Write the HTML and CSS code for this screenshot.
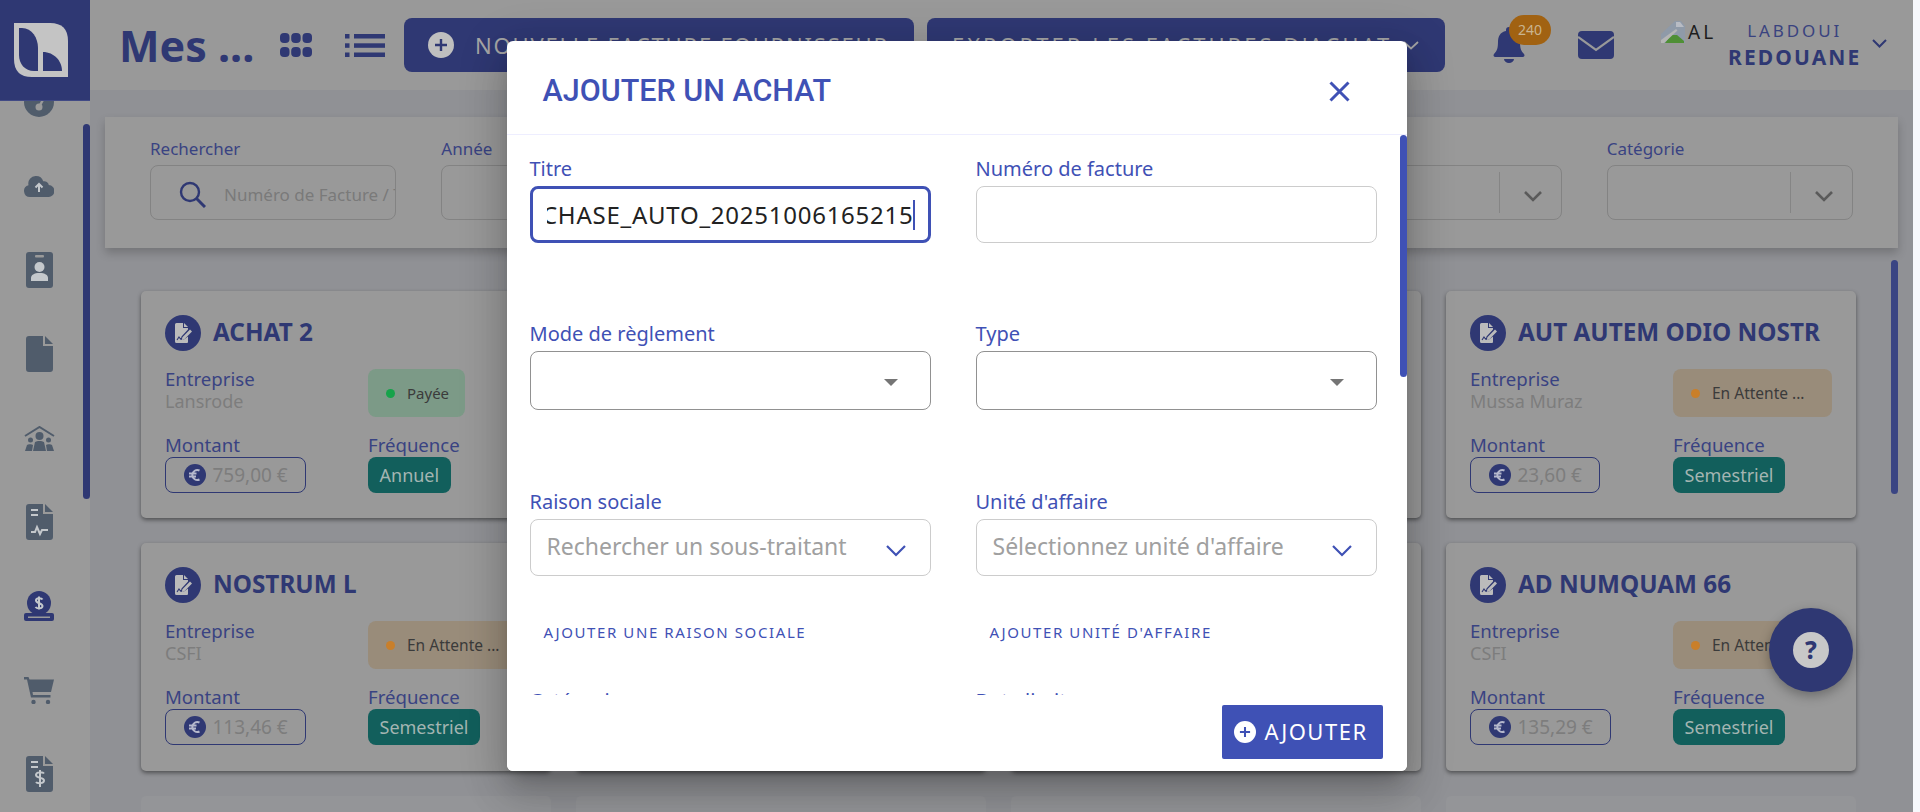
FILE: index.html
```html
<!DOCTYPE html>
<html lang="fr">
<head>
<meta charset="utf-8">
<title>Mes achats</title>
<link rel="stylesheet" href="styles.css">
</head>
<body>
<svg class="defs" width="0" height="0" aria-hidden="true">
  <symbol id="i-doc" viewBox="0 0 24 24">
    <path fill="currentColor" d="M4 3.500a1.500 1.500 0 0 1 1.500-1.500H12v5h5v1.600l-6.500 6.800-.8 3.600 3.600-.8L17 15.400V21a1 1 0 0 1-1 1H5.500A1.500 1.500 0 0 1 4 20.500z"/>
    <path fill="currentColor" d="M13 2l4 4h-4zM19 8.500l2 2-7.600 7.800-2.600.6.6-2.600z"/>
    <path fill="none" stroke="#2f3873" stroke-width="1.100" d="M6 19l2-3 1.500 2 1-.8"/>
  </symbol>
  <symbol id="i-euro" viewBox="0 0 22 22">
    <circle cx="11" cy="11" r="11" fill="#2f3873"/>
    <path fill="none" stroke="#b5b8cc" stroke-width="2" d="M15.500 6.500a5 5 0 1 0 0 9M5 9.500h7.500M5 12.500h7"/>
  </symbol>
  <symbol id="i-plus" viewBox="0 0 26 26">
    <circle cx="13" cy="13" r="13" fill="currentColor"/>
    <path stroke="var(--plus)" stroke-width="2.400" d="M13 7v12M7 13h12"/>
  </symbol>
</svg>

<div class="app">
  <aside class="sidebar">
    <div class="logo">
      <svg width="54" height="54" viewBox="0 0 54 54">
        <path fill="#c4c4c4" d="M0 0H36Q54 0 54 18V54H18Q0 54 0 36Z"/>
        <path fill="#2f3873" d="M5 5H8C18 5 24 15 24 25V48H20C11 48 5 41 5 32Z"/>
        <path fill="#2f3873" d="M29 29C40 29 48 38 48 48H29Z"/>
      </svg>
    </div>
    <nav class="nav">
      <span class="nav-item"><svg width="30" height="30" viewBox="0 0 30 30"><circle cx="15" cy="15" r="15" fill="currentColor"/><circle cx="15" cy="20" r="3.500" fill="#9a9a9a"/><path stroke="#9a9a9a" stroke-width="2.500" d="M15 20l5-9"/></svg></span>
      <span class="nav-item"><svg width="30" height="21" viewBox="0 0 30 21"><path fill="currentColor" d="M6 21a6 6 0 0 1-1.500-11.800A7.500 7.500 0 0 1 12 0a7.500 7.500 0 0 1 7.200 5.300A4.500 4.500 0 0 1 24.800 9 6 6 0 0 1 24 21z"/><path fill="none" stroke="#c4c8cc" stroke-width="2" d="M15 16V8M11.500 11.500L15 8l3.500 3.500"/></svg></span>
      <span class="nav-item"><svg width="27" height="36" viewBox="0 0 27 36"><rect width="27" height="36" rx="3" fill="currentColor"/><rect x="9" y="3" width="9" height="2.500" rx="1" fill="#9a9a9a"/><circle cx="13.500" cy="15" r="5" fill="#c4c8cc"/><path fill="#c4c8cc" d="M5 29v-3c0-3 3-5 8.500-5S22 23 22 26v3z"/></svg></span>
      <span class="nav-item"><svg width="27" height="36" viewBox="0 0 27 36"><path fill="currentColor" d="M3 0H17V10H27V33a3 3 0 0 1-3 3H3a3 3 0 0 1-3-3V3a3 3 0 0 1 3-3zM19 0L27 8H19z"/></svg></span>
      <span class="nav-item"><svg width="31" height="25" viewBox="0 0 31 25"><path fill="none" stroke="currentColor" stroke-width="2" d="M1 10L15.500 1 30 10"/><circle cx="15.500" cy="10" r="4" fill="currentColor"/><circle cx="6.500" cy="14" r="2.500" fill="currentColor"/><circle cx="24.500" cy="14" r="2.500" fill="currentColor"/><path fill="currentColor" d="M9 25l2-9c2-1.500 7-1.500 9 0l2 9zM1 25l2-6c1-1 5-1 6 0l-1 6zM30 25l-2-6c-1-1-5-1-6 0l1 6z"/></svg></span>
      <span class="nav-item"><svg width="27" height="36" viewBox="0 0 27 36"><path fill="currentColor" d="M3 0H17V10H27V33a3 3 0 0 1-3 3H3a3 3 0 0 1-3-3V3a3 3 0 0 1 3-3zM19 0L27 8H19z"/><path fill="none" stroke="#c4c8cc" stroke-width="2" d="M5 6h7M5 11h7M5 28h4l2-5 3 7 2-4h6"/></svg></span>
      <span class="nav-item"><svg width="30" height="30" viewBox="0 0 30 30"><rect x="0" y="22" width="30" height="8" rx="2" fill="#2f3873"/><rect x="4" y="25.500" width="22" height="1.500" fill="#9a9a9a"/><circle cx="15" cy="12" r="12" fill="#2f3873"/><path fill="none" stroke="#c4c8cc" stroke-width="2" d="M18.500 8.500C17.500 7 12 6.500 12 9.500S18.500 12 18.500 15 13 18 11.500 16M15 5.500v13"/></svg></span>
      <span class="nav-item"><svg width="30" height="27" viewBox="0 0 30 27"><path fill="currentColor" d="M0 0H4.500L5.500 2.500H30L27 15H8.500L9 18H26.500V20.500H7L3 2.500H0z"/><circle cx="9.500" cy="25" r="2.200" fill="currentColor"/><circle cx="24" cy="25" r="2.200" fill="currentColor"/></svg></span>
      <span class="nav-item"><svg width="27" height="36" viewBox="0 0 27 36"><path fill="currentColor" d="M3 0H17V10H27V33a3 3 0 0 1-3 3H3a3 3 0 0 1-3-3V3a3 3 0 0 1 3-3zM19 0L27 8H19z"/><path fill="none" stroke="#c4c8cc" stroke-width="2" d="M5 6h7M5 11h7M18 17.500c-1-1.500-8-2-8 1.500s8 2 8 5.500-7 3-8 1.500M14 14v17"/></svg></span>
    </nav>
    <span class="side-scroll"></span>
  </aside>

  <div class="main">
    <header class="topbar">
      <h1 class="page-title">Mes ...</h1>
      <svg class="view-grid" width="32" height="24" viewBox="0 0 32 24"><g fill="#2f3873"><rect width="9.500" height="10" rx="4"/><rect x="11.200" width="9.500" height="10" rx="4"/><rect x="22.500" width="9.500" height="10" rx="4"/><rect y="14" width="9.500" height="10" rx="4"/><rect x="11.200" y="14" width="9.500" height="10" rx="4"/><rect x="22.500" y="14" width="9.500" height="10" rx="4"/></g></svg>
      <svg class="view-list" width="40" height="23" viewBox="0 0 40 23"><g fill="#2f3873"><rect width="4.500" height="4.500"/><rect x="9" width="31" height="4.500"/><rect y="9.300" width="4.500" height="4.500"/><rect x="9" y="9.300" width="31" height="4.500"/><rect y="18.500" width="4.500" height="4.500"/><rect x="9" y="18.500" width="31" height="4.500"/></g></svg>
      <button class="top-btn top-btn-new" type="button"><svg class="plus-dim" width="26" height="26"><use href="#i-plus"/></svg><span>NOUVELLE FACTURE FOURNISSEUR</span></button>
      <button class="top-btn top-btn-export" type="button"><span>EXPORTER LES FACTURES D'ACHAT</span><svg width="16" height="9" viewBox="0 0 16 9"><path fill="none" stroke="#a5a5a5" stroke-width="1.800" d="M1 1l7 6.500L15 1"/></svg></button>
      <div class="bell">
        <svg width="32" height="36" viewBox="0 0 32 36"><path fill="#2f3873" d="M16 0a3 3 0 0 1 3 3v1c6 1 8 6 8 11 0 6 1 9 4 12 1 1 .5 3-1.500 3h-27C.5 30 0 28 1 27c3-3 4-6 4-12 0-5 2-10 8-11V3a3 3 0 0 1 3-3zM11 32h10a5 4 0 0 1-10 0z"/></svg>
        <span class="bell-badge">240</span>
      </div>
      <svg class="mail" width="36" height="28" viewBox="0 0 36 28"><rect width="36" height="28" rx="4" fill="#2f3873"/><path fill="none" stroke="#999" stroke-width="2.200" d="M0 6l18 13L36 6"/></svg>
      <div class="avatar">
        <svg width="24" height="22" viewBox="0 0 24 22"><path fill="#8f9aa8" d="M0 13L14 0H20L24 5V22H0z"/><path fill="#b8bcc4" d="M15 1h4l4 5h-8z"/><path fill="#4f8f35" d="M4 22L10 14H16L23 20V22z"/><path fill="#b5b5b5" d="M0 19L15 8l1.500 1.500L3 22H0z"/></svg>
        <span class="avatar-alt">AL</span>
      </div>
      <div class="user">
        <span class="user-first">LABDOUI</span>
        <span class="user-last">REDOUANE</span>
      </div>
      <svg class="user-chevron" width="15" height="9" viewBox="0 0 15 9"><path fill="none" stroke="#2f3873" stroke-width="2" d="M1 1l6.500 6.500L14 1"/></svg>
    </header>

    <section class="content">
      <form class="filters">
        <div class="filter">
          <label class="filter-label">Rechercher</label>
          <div class="filter-box filter-search">
            <svg width="27" height="27" viewBox="0 0 27 27"><circle cx="11" cy="11" r="9" fill="none" stroke="#2f3873" stroke-width="2.400"/><path stroke="#2f3873" stroke-width="3" d="M17.500 17.500L26 26"/></svg>
            <span class="filter-placeholder">Numéro de Facture / Titre</span>
          </div>
        </div>
        <div class="filter"><label class="filter-label">Année</label><div class="filter-box"></div></div>
        <div class="filter"><label class="filter-label">Mois</label><div class="filter-box filter-select"><span class="sel-arrow"><svg width="18" height="11" viewBox="0 0 18 11"><path fill="none" stroke="#5a5a5a" stroke-width="2.600" d="M1 1l8 8 8-8"/></svg></span></div></div>
        <div class="filter"><label class="filter-label">Statut</label><div class="filter-box filter-select"><span class="sel-arrow"><svg width="18" height="11" viewBox="0 0 18 11"><path fill="none" stroke="#5a5a5a" stroke-width="2.600" d="M1 1l8 8 8-8"/></svg></span></div></div>
        <div class="filter"><label class="filter-label">Type</label><div class="filter-box filter-select"><span class="sel-arrow"><svg width="18" height="11" viewBox="0 0 18 11"><path fill="none" stroke="#5a5a5a" stroke-width="2.600" d="M1 1l8 8 8-8"/></svg></span></div></div>
        <div class="filter"><label class="filter-label">Catégorie</label><div class="filter-box filter-select"><span class="sel-arrow"><svg width="18" height="11" viewBox="0 0 18 11"><path fill="none" stroke="#5a5a5a" stroke-width="2.600" d="M1 1l8 8 8-8"/></svg></span></div></div>
      </form>

      <div class="cards">
        <article class="card"><h2 class="card-title"><span class="card-icon"><svg width="24" height="24"><use href="#i-doc"/></svg></span>ACHAT 2</h2><div class="card-grid"><div class="kv"><span class="k">Entreprise</span><span class="v">Lansrode</span></div><div class="status status-paid"><i></i>Payée</div><div class="kv2"><span class="k">Montant</span><span class="amount"><svg width="22" height="22"><use href="#i-euro"/></svg>759,00 €</span></div><div class="kv2"><span class="k">Fréquence</span><span class="freq">Annuel</span></div></div></article>
        <article class="card"><h2 class="card-title"><span class="card-icon"><svg width="24" height="24"><use href="#i-doc"/></svg></span>ACHAT 3</h2><div class="card-grid"><div class="kv"><span class="k">Entreprise</span><span class="v">CSFI</span></div><div class="status status-wait"><i></i>En Attente ...</div><div class="kv2"><span class="k">Montant</span><span class="amount"><svg width="22" height="22"><use href="#i-euro"/></svg>320,10 €</span></div><div class="kv2"><span class="k">Fréquence</span><span class="freq">Annuel</span></div></div></article>
        <article class="card"><h2 class="card-title"><span class="card-icon"><svg width="24" height="24"><use href="#i-doc"/></svg></span>ACHAT 4</h2><div class="card-grid"><div class="kv"><span class="k">Entreprise</span><span class="v">CSFI</span></div><div class="status status-wait"><i></i>En Attente ...</div><div class="kv2"><span class="k">Montant</span><span class="amount"><svg width="22" height="22"><use href="#i-euro"/></svg>98,40 €</span></div><div class="kv2"><span class="k">Fréquence</span><span class="freq">Semestriel</span></div></div></article>
        <article class="card"><h2 class="card-title"><span class="card-icon"><svg width="24" height="24"><use href="#i-doc"/></svg></span>AUT AUTEM ODIO NOSTR</h2><div class="card-grid"><div class="kv"><span class="k">Entreprise</span><span class="v">Mussa Muraz</span></div><div class="status status-wait"><i></i>En Attente ...</div><div class="kv2"><span class="k">Montant</span><span class="amount"><svg width="22" height="22"><use href="#i-euro"/></svg>23,60 €</span></div><div class="kv2"><span class="k">Fréquence</span><span class="freq">Semestriel</span></div></div></article>
        <article class="card"><h2 class="card-title"><span class="card-icon"><svg width="24" height="24"><use href="#i-doc"/></svg></span>NOSTRUM L</h2><div class="card-grid"><div class="kv"><span class="k">Entreprise</span><span class="v">CSFI</span></div><div class="status status-wait"><i></i>En Attente ...</div><div class="kv2"><span class="k">Montant</span><span class="amount"><svg width="22" height="22"><use href="#i-euro"/></svg>113,46 €</span></div><div class="kv2"><span class="k">Fréquence</span><span class="freq">Semestriel</span></div></div></article>
        <article class="card"><h2 class="card-title"><span class="card-icon"><svg width="24" height="24"><use href="#i-doc"/></svg></span>ACHAT 6</h2><div class="card-grid"><div class="kv"><span class="k">Entreprise</span><span class="v">Lansrode</span></div><div class="status status-paid"><i></i>Payée</div><div class="kv2"><span class="k">Montant</span><span class="amount"><svg width="22" height="22"><use href="#i-euro"/></svg>45,00 €</span></div><div class="kv2"><span class="k">Fréquence</span><span class="freq">Annuel</span></div></div></article>
        <article class="card"><h2 class="card-title"><span class="card-icon"><svg width="24" height="24"><use href="#i-doc"/></svg></span>ACHAT 7</h2><div class="card-grid"><div class="kv"><span class="k">Entreprise</span><span class="v">Mussa Muraz</span></div><div class="status status-wait"><i></i>En Attente ...</div><div class="kv2"><span class="k">Montant</span><span class="amount"><svg width="22" height="22"><use href="#i-euro"/></svg>76,20 €</span></div><div class="kv2"><span class="k">Fréquence</span><span class="freq">Annuel</span></div></div></article>
        <article class="card"><h2 class="card-title"><span class="card-icon"><svg width="24" height="24"><use href="#i-doc"/></svg></span>AD NUMQUAM 66</h2><div class="card-grid"><div class="kv"><span class="k">Entreprise</span><span class="v">CSFI</span></div><div class="status status-wait"><i></i>En Attente ...</div><div class="kv2"><span class="k">Montant</span><span class="amount"><svg width="22" height="22"><use href="#i-euro"/></svg>135,29 €</span></div><div class="kv2"><span class="k">Fréquence</span><span class="freq">Semestriel</span></div></div></article>
        <article class="card card-fade"></article>
        <article class="card card-fade"></article>
        <article class="card card-fade"></article>
        <article class="card card-fade"></article>
      </div>
      <span class="main-scroll"></span>
    </section>
  </div>

  <button class="fab" type="button"><span>?</span></button>

  <div class="modal-layer">
    <div class="modal" role="dialog">
      <div class="modal-head">
        <h2 class="modal-title">AJOUTER UN ACHAT</h2>
        <svg class="modal-close" width="21" height="21" viewBox="0 0 21 21"><path stroke="#3f51b5" stroke-width="3" d="M1.500 1.500l18 18M19.500 1.500l-18 18"/></svg>
      </div>
      <div class="modal-body">
        <div class="form-row form-row-first">
          <div class="field"><label class="field-label">Titre</label><div class="input input-focus"><div class="input-clip"><span class="input-value">PURCHASE_AUTO_20251006165215</span><span class="caret"></span></div></div></div>
          <div class="field"><label class="field-label">Numéro de facture</label><div class="input"></div></div>
        </div>
        <div class="form-row form-row-second">
          <div class="field"><label class="field-label">Mode de règlement</label><div class="input input-select"><i class="tri"></i></div></div>
          <div class="field"><label class="field-label">Type</label><div class="input input-select"><i class="tri"></i></div></div>
        </div>
        <div class="form-row">
          <div class="field"><label class="field-label">Raison sociale</label><div class="input input-search"><span class="ph">Rechercher un sous-traitant</span><svg width="20" height="12" viewBox="0 0 20 12"><path fill="none" stroke="#3f51b5" stroke-width="2.200" d="M1 1l9 9 9-9"/></svg></div></div>
          <div class="field"><label class="field-label">Unité d'affaire</label><div class="input input-search"><span class="ph">Sélectionnez unité d'affaire</span><svg width="20" height="12" viewBox="0 0 20 12"><path fill="none" stroke="#3f51b5" stroke-width="2.200" d="M1 1l9 9 9-9"/></svg></div></div>
        </div>
        <div class="form-row form-row-links">
          <a class="add-link">AJOUTER UNE RAISON SOCIALE</a>
          <a class="add-link">AJOUTER UNITÉ D'AFFAIRE</a>
        </div>
        <div class="form-row form-row-last">
          <div class="field"><label class="field-label">Catégorie</label></div>
          <div class="field"><label class="field-label">Date limite</label></div>
        </div>
        <span class="modal-scroll"></span>
      </div>
      <div class="modal-foot">
        <button class="submit" type="button"><svg class="plus-white" width="22" height="22" viewBox="0 0 26 26"><use href="#i-plus"/></svg><span class="submit-text">AJOUTER</span></button>
      </div>
    </div>
  </div>
</div>
</body>
</html>
```
FILE: styles.css
```css
* { box-sizing: border-box; }
html, body { margin: 0; height: 812px; overflow: hidden; background: #f7f8fc; }
body { font-family: "Noto Sans", sans-serif; }
.defs { position: absolute; }
h1, h2 { margin: 0; }
button { font: inherit; border: 0; }

.app { position: relative; display: flex; width: 1913px; height: 812px; overflow: hidden; background: #909195; }

/* sidebar */
.sidebar { position: relative; flex: 0 0 90px; background: #9a9a9a; overflow: hidden; }
.logo { position: relative; z-index: 2; height: 101px; padding: 23px 0 0 14px; background: #2f3873; border-bottom: 1px solid #414a85; }
.nav { display: flex; flex-direction: column; margin-top: -41px; color: #505c6b; }
.nav-item { display: flex; flex: 0 0 84px; align-items: center; justify-content: center; padding-right: 12px; }
.side-scroll { position: absolute; top: 124px; right: 0; width: 7px; height: 375px; border-radius: 4px; background: #2f3873; }

/* top bar */
.main { display: flex; flex: 1; flex-direction: column; min-width: 0; }
.topbar { display: flex; flex: 0 0 90px; align-items: center; padding-left: 29px; background: #999; }
.page-title { flex: 0 0 161px; font-size: 43px; font-weight: 700; line-height: 1; color: #2f3873; white-space: nowrap; }
.view-grid { flex: none; margin-right: 33px; }
.view-list { flex: none; margin-right: 19px; }
.top-btn { display: flex; align-items: center; height: 54px; border-radius: 8px; background: #2f3873; color: #a5a5a5; font-size: 22px; letter-spacing: 1.800px; white-space: nowrap; }
.top-btn-new { flex: 0 0 510px; gap: 21px; padding-left: 24px; }
.top-btn-export { flex: 0 0 518px; gap: 11px; margin-left: 13px; padding-left: 25px; letter-spacing: 3px; }
.top-btn-export svg { flex: none; }
.plus-dim { flex: none; color: #bfbfbf; --plus: #2f3873; }
.bell { position: relative; flex: none; width: 32px; height: 36px; margin-left: 48px; }
.bell-badge { position: absolute; top: -12px; left: 16px; width: 42px; height: 30px; border-radius: 15px; background: #a16212; color: #c9b48f; font-size: 14px; line-height: 30px; text-align: center; }
.mail { flex: none; margin-left: 53px; }
.avatar { display: flex; flex: 0 0 52px; align-items: center; min-width: 0; margin: 0 0 26px 47px; }
.avatar svg { flex: none; }
.avatar-alt { margin-left: 3px; color: #1d1d1d; font-size: 19px; letter-spacing: 3px; line-height: 22px; white-space: nowrap; }
.user { display: flex; flex: 0 0 132px; flex-direction: column; align-items: center; margin: 0 0 2px 15px; color: #2f3873; white-space: nowrap; }
.user-first { font-size: 17px; letter-spacing: 2.900px; line-height: 26px; color: #39437f; }
.user-last { font-size: 21px; font-weight: 700; letter-spacing: 2.100px; line-height: 26px; }
.user-chevron { flex: none; margin: 0 0 3px 11px; }

/* filters */
.content { position: relative; flex: 1; padding: 27px 15px 0; overflow: hidden; }
.filters { display: grid; grid-template-columns: repeat(6, minmax(0, 1fr)); column-gap: 45px; height: 131px; padding: 20px 45px 0; background: #999; box-shadow: 0 5px 9px rgba(0, 0, 0, .2); }
.filter-label { display: block; height: 28px; font-size: 17px; line-height: 24px; color: #394382; }
.filter-box { position: relative; height: 55px; border: 1px solid #838383; border-radius: 8px; overflow: hidden; }
.filter-search { display: flex; align-items: center; gap: 18px; padding: 4px 0 0 28px; }
.filter-search svg { flex: none; }
.filter-placeholder { font-size: 17px; color: #7a7a7a; white-space: nowrap; }
.sel-arrow { position: absolute; top: 6px; right: 0; bottom: 6px; display: flex; align-items: center; justify-content: center; width: 62px; border-left: 1px solid #858585; padding: 7px 0 0 5px; }

/* cards */
.cards { display: grid; grid-template-columns: repeat(4, 410px); grid-auto-rows: 227.400px; gap: 25px; margin: 43px 0 0 36px; }
.card { padding: 24px; border-radius: 5px; background: #999; box-shadow: 0 2px 4px rgba(0, 0, 0, .45); }
.card-fade { background: #949598; box-shadow: none; }
.card-title { display: flex; align-items: flex-start; gap: 12px; height: 36px; font-size: 24.300px; font-weight: 700; line-height: 34px; color: #2f3873; white-space: nowrap; overflow: hidden; }
.card-icon { display: flex; flex: 0 0 36px; align-items: center; justify-content: center; height: 36px; border-radius: 50%; background: #2f3873; color: #bbb; }
.card-grid { display: grid; grid-template-columns: 203px 1fr; grid-template-rows: 48px auto; row-gap: 18px; margin-top: 18px; }
.kv, .kv2 { display: flex; flex-direction: column; align-items: flex-start; }
.k { height: 22px; font-size: 18.600px; line-height: 20px; color: #394382; }
.v { font-size: 18px; line-height: 20px; color: #7d7d7d; }
.status { display: flex; align-items: center; justify-self: start; gap: 12px; height: 48px; padding: 0 18px; border-radius: 8px; font-size: 15.500px; color: #3b3b3b; white-space: nowrap; }
.status i { flex: 0 0 9px; height: 9px; border-radius: 50%; }
.status-paid { width: 97px; background: #7c9a87; font-size: 15px; }
.status-paid i { background: #16a34a; }
.status-wait { width: 159px; background: #998c7a; }
.status-wait i { background: #c97f2a; }
.amount { display: flex; align-items: center; gap: 7px; height: 36px; padding: 0 17.500px; border: 1px solid #2f3873; border-radius: 8px; font-size: 19px; color: #7d7d7d; }
.amount svg { flex: none; }
.freq { display: flex; align-items: center; height: 36px; padding: 0 11.500px; border-radius: 8px; background: #125f5c; font-size: 18px; color: #a3b5b2; }
.main-scroll { position: absolute; top: 170px; right: 15px; width: 7px; height: 234px; border-radius: 4px; background: #3a4583; }

/* help button */
.fab { position: absolute; top: 608px; left: 1769px; display: flex; align-items: center; justify-content: center; width: 84px; height: 84px; padding: 0; border-radius: 50%; background: #2f3873; box-shadow: 0 4px 12px rgba(0, 0, 0, .3); }
.fab span { display: block; width: 36px; height: 36px; border-radius: 50%; background: #c8c8c8; color: #2f3873; font-size: 24px; font-weight: 800; line-height: 36px; text-align: center; }

/* modal */
.modal-layer { position: absolute; inset: 0; display: flex; align-items: flex-start; justify-content: center; padding-top: 41px; }
.modal { display: flex; flex-direction: column; width: 900px; height: 730px; border-radius: 6px; overflow: hidden; background: #fff; box-shadow: 0 11px 15px -7px rgba(0, 0, 0, .2), 0 24px 38px 3px rgba(0, 0, 0, .14), 0 9px 46px 8px rgba(0, 0, 0, .12); }
.modal-head { display: flex; flex: 0 0 94px; align-items: center; justify-content: space-between; padding: 6px 57px 0 36px; border-bottom: 1px solid #eeeeff; }
.modal-title { font-family: Roboto, sans-serif; font-size: 30.500px; font-weight: 500; color: #3f51b5; }
.modal-close { margin-top: 2px; }
.modal-body { position: relative; flex: 1; padding: 0 30px 0 23px; overflow: hidden; }
.form-row { display: grid; grid-template-columns: 401px 401px; column-gap: 45px; margin-top: 83px; }
.form-row-first { margin-top: 25px; }
.form-row-second { margin-top: 82px; }
.field-label { display: block; height: 26px; font-size: 20px; line-height: 18px; color: #3f51b5; white-space: nowrap; }
.input { display: flex; align-items: center; height: 57px; border: 1px solid #ccc; border-radius: 8px; }
.input-focus { padding: 0 13px 0 14px; border: 3px solid #3f51b5; }
.input-clip { display: flex; flex: 1; align-items: center; justify-content: flex-end; min-width: 0; height: 100%; overflow: hidden; }
.input-value { flex: none; font-size: 24px; letter-spacing: .75px; color: #222; white-space: nowrap; }
.caret { flex: none; width: 2px; height: 30px; margin-left: -1px; background: #3f51b5; }
.input-select { position: relative; height: 59px; border-color: #919191; }
.tri { position: absolute; top: 27px; right: 32px; border-style: solid; border-width: 7px 7.500px 0; border-color: #757575 transparent transparent; }
.input-search { justify-content: space-between; padding: 0 24px 4px 16px; }
.input-search svg { flex: none; margin-top: 10px; }
.ph { font-size: 23px; color: #a0a0a0; white-space: nowrap; }
.form-row-links { margin-top: 44px; padding-left: 14px; height: 24px; }
.add-link { font-size: 15px; line-height: 24px; letter-spacing: 1.600px; color: #3f51b5; white-space: nowrap; }
.form-row-last { margin-top: 48px; }
.modal-scroll { position: absolute; top: 0; right: 0; width: 7px; height: 242px; border-radius: 4px; background: #3f51b5; }
.modal-foot { display: flex; flex: 0 0 76px; justify-content: flex-end; padding: 10px 24px 0 0; background: #fff; }
.submit { display: flex; align-items: center; gap: 9px; width: 161px; height: 54px; padding-left: 12px; border-radius: 2px; background: #3f51b5; color: #fff; font-size: 22px; letter-spacing: 1.500px; }
.submit-text { margin-top: -2px; }
.plus-white { flex: none; color: #fff; --plus: #3f51b5; }
```
